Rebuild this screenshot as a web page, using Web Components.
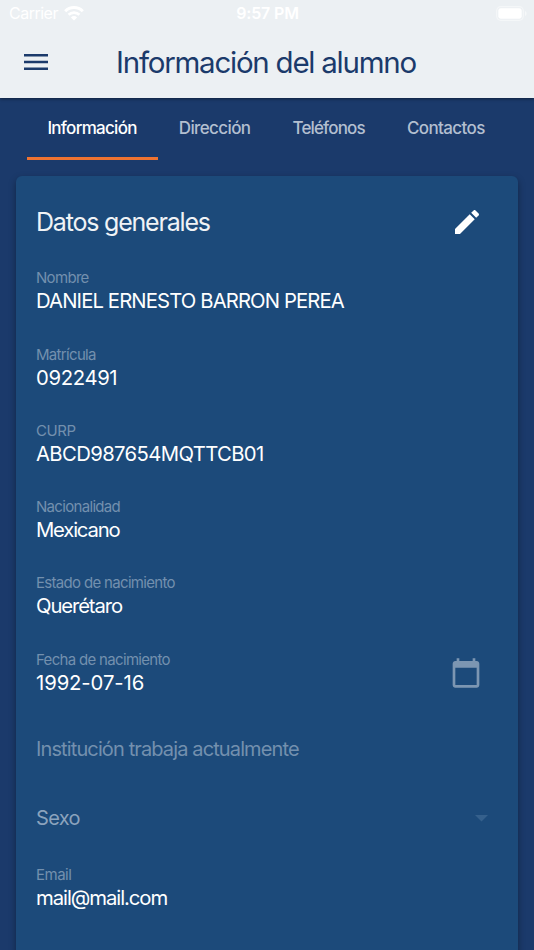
<!DOCTYPE html>
<html lang="es">
<head>
<meta charset="UTF-8">
<meta name="viewport" content="width=device-width, initial-scale=1.0">
<title>Información del alumno</title>
<style>
    html, body {
        margin: 0;
        height: 950px;
        overflow: hidden;
    }
    body {
        --navy: #1b3a6b;
        --card: #1c4a7a;
        --bar: #ecf0f3;
        --accent: #ef7331;
        --muted: #7390ae;
        background: var(--navy);
        color: #fff;
        font-family: Inter, Roboto, "Liberation Sans", sans-serif;
    }
</style>
</head>
<body>
<student-app>
    <status-bar slot="header" carrier="Carrier" time="9:57 PM"></status-bar>
    <nav-bar slot="header">Información del alumno</nav-bar>
    <tab-bar slot="tabs">
        <tab-item active style="letter-spacing: -0.72px">Información</tab-item>
        <tab-item style="letter-spacing: -0.62px">Dirección</tab-item>
        <tab-item style="letter-spacing: -0.85px">Teléfonos</tab-item>
        <tab-item style="letter-spacing: -0.6px">Contactos</tab-item>
    </tab-bar>
    <data-card heading="Datos generales">
        <data-field label="Nombre" style="--track: -0.88px">DANIEL ERNESTO BARRON PEREA</data-field>
        <data-field label="Matrícula" style="--track: -0.35px">0922491</data-field>
        <data-field label="CURP" style="--track: -0.63px; --label-track: -0.4px">ABCD987654MQTTCB01</data-field>
        <data-field label="Nacionalidad" style="--track: -1.2px">Mexicano</data-field>
        <data-field label="Estado de nacimiento" style="--track: -1.12px">Querétaro</data-field>
        <data-field label="Fecha de nacimiento" icon="calendar" style="--track: -0.1px">1992-07-16</data-field>
        <empty-field style="--track: -0.88px">Institución trabaja actualmente</empty-field>
        <empty-field select style="--track: -0.67px">Sexo</empty-field>
        <data-field label="Email" style="--track: -1.06px; --label-track: -0.5px">mail@mail.com</data-field>
    </data-card>
</student-app>

<script>
class StudentApp extends HTMLElement {
    constructor() {
        super();
        this.attachShadow({ mode: 'open' });
    }

    connectedCallback() {
        this.shadowRoot.innerHTML = `
            <style>
                :host {
                    display: flex;
                    flex-direction: column;
                    height: 950px;
                    overflow: hidden;
                }
                header {
                    flex: none;
                    height: 98px;
                    background: var(--bar);
                    box-shadow: 0 1px 3px rgba(0, 0, 0, 0.45);
                }
                main {
                    padding: 0 16px;
                }
            </style>
            <header><slot name="header"></slot></header>
            <slot name="tabs"></slot>
            <main><slot></slot></main>
        `;
    }
}

class StatusBar extends HTMLElement {
    constructor() {
        super();
        this.attachShadow({ mode: 'open' });
    }

    connectedCallback() {
        this.shadowRoot.innerHTML = `
            <style>
                :host {
                    display: grid;
                    grid-template-columns: 1fr auto 1fr;
                    align-items: center;
                    height: 27px;
                    padding: 0 8px 0 9px;
                    font-size: 16px;
                    line-height: 27px;
                }
                .carrier {
                    display: flex;
                    align-items: center;
                    gap: 6px;
                    letter-spacing: -0.5px;
                }
                .time {
                    font-weight: 600;
                    letter-spacing: -0.15px;
                }
                .battery {
                    justify-self: end;
                    margin-right: -1px;
                }
                svg {
                    display: block;
                }
            </style>
            <div class="carrier">
                <span>${this.getAttribute('carrier')}</span>
                <svg width="20" height="15" viewBox="0 0 20 15" fill="none" stroke="#fff">
                    <path d="M1.2 5.2a12.5 12.5 0 0 1 17.6 0" stroke-width="3"/>
                    <path d="M4.6 8.8a7.7 7.7 0 0 1 10.8 0" stroke-width="2.7"/>
                    <path d="M10 14.6 6.9 11.4a4.4 4.4 0 0 1 6.2 0z" fill="#fff" stroke="none"/>
                </svg>
            </div>
            <div class="time">${this.getAttribute('time')}</div>
            <svg class="battery" width="31" height="15" viewBox="0 0 31 15">
                <rect x=".7" y=".7" width="26.6" height="13.6" rx="4" fill="none" stroke="#fff" stroke-opacity=".45" stroke-width="1.2"/>
                <rect x="2.3" y="2.3" width="23.4" height="10.4" rx="2.4" fill="#fff"/>
                <path d="M29 5v5c1-.4 1.6-1.4 1.6-2.5S30 5.4 29 5z" fill="#fff" fill-opacity=".5"/>
            </svg>
        `;
    }
}

class NavBar extends HTMLElement {
    constructor() {
        super();
        this.attachShadow({ mode: 'open' });
    }

    connectedCallback() {
        this.shadowRoot.innerHTML = `
            <style>
                :host {
                    display: grid;
                    grid-template-columns: 24px 1fr 24px;
                    align-items: center;
                    height: 70px;
                    padding: 0 26px 0 24px;
                    color: var(--navy);
                }
                svg {
                    display: block;
                }
                .title {
                    font-size: 29.5px;
                    line-height: 40px;
                    letter-spacing: -1.25px;
                    text-align: center;
                    white-space: nowrap;
                }
            </style>
            <svg width="24" height="16" viewBox="0 0 24 16" fill="currentColor">
                <path d="M0 0h24v2.6H0zM0 6.7h24v2.6H0zM0 13.4h24V16H0z"/>
            </svg>
            <div class="title"><slot></slot></div>
        `;
    }
}

class TabBar extends HTMLElement {
    constructor() {
        super();
        this.attachShadow({ mode: 'open' });
    }

    connectedCallback() {
        this.shadowRoot.innerHTML = `
            <style>
                :host {
                    display: flex;
                    flex: none;
                    height: 62px;
                    padding: 0 27px 16px;
                }
            </style>
            <slot></slot>
        `;
    }
}

class TabItem extends HTMLElement {
    constructor() {
        super();
        this.attachShadow({ mode: 'open' });
    }

    connectedCallback() {
        this.shadowRoot.innerHTML = `
            <style>
                :host {
                    box-sizing: border-box;
                    display: block;
                    height: 62px;
                    padding: 0 21.7px 0 20.4px;
                    border-bottom: 3px solid transparent;
                    color: #b3bfd0;
                    font-size: 17px;
                    font-weight: 500;
                    line-height: 60px;
                    white-space: nowrap;
                }
                :host([active]) {
                    border-bottom-color: var(--accent);
                    color: #fff;
                }
            </style>
            <slot></slot>
        `;
    }
}

class DataCard extends HTMLElement {
    constructor() {
        super();
        this.attachShadow({ mode: 'open' });
    }

    connectedCallback() {
        this.shadowRoot.innerHTML = `
            <style>
                :host {
                    box-sizing: border-box;
                    display: flex;
                    flex-direction: column;
                    height: 800px;
                    padding: 30px 36px 0 20px;
                    border-radius: 6px;
                    background: var(--card);
                    box-shadow: 0 3px 7px rgba(0, 0, 0, 0.36);
                }
                .head {
                    display: flex;
                    justify-content: space-between;
                    align-items: center;
                    height: 32px;
                    margin: 0 -1px 31.4px 0;
                }
                h2 {
                    margin: 0;
                    color: #f0f3f6;
                    font-size: 25px;
                    font-weight: 400;
                    letter-spacing: -1.2px;
                    line-height: 35px;
                    white-space: nowrap;
                }
            </style>
            <div class="head">
                <h2>${this.getAttribute('heading')}</h2>
                <svg width="32" height="32" viewBox="0 0 24 24" fill="#fff">
                    <path d="M3 17.25V21h3.75L17.81 9.94l-3.75-3.75L3 17.25zM20.71 7.04c.39-.39.39-1.02 0-1.41l-2.34-2.34c-.39-.39-1.02-.39-1.41 0l-1.83 1.83 3.75 3.75 1.83-1.83z"/>
                </svg>
            </div>
            <slot></slot>
        `;
    }
}

class DataField extends HTMLElement {
    constructor() {
        super();
        this.attachShadow({ mode: 'open' });
    }

    connectedCallback() {
        const hasIcon = this.getAttribute('icon') === 'calendar';

        this.shadowRoot.innerHTML = `
            <style>
                :host {
                    display: flex;
                    justify-content: space-between;
                    flex: none;
                    height: 46px;
                    margin-bottom: 30.25px;
                    white-space: nowrap;
                }
                .label {
                    color: var(--muted);
                    font-size: 15px;
                    line-height: 18px;
                    letter-spacing: var(--label-track, -0.68px);
                }
                .value {
                    font-size: 20.3px;
                    line-height: 28.3px;
                    letter-spacing: var(--track);
                }
                svg {
                    margin-top: 6px;
                }
            </style>
            <div>
                <div class="label">${this.getAttribute('label')}</div>
                <div class="value"><slot></slot></div>
            </div>
            ${hasIcon ? `
                <svg width="32" height="32" viewBox="0 0 24 24" fill="#7c96b2">
                    <path d="M20 3h-1V1h-2v2H7V1H5v2H4c-1.1 0-2 .9-2 2v16c0 1.1.9 2 2 2h16c1.1 0 2-.9 2-2V5c0-1.1-.9-2-2-2zm0 18H4V8h16v13z"/>
                </svg>
            ` : ''}
        `;
    }
}

// Field without a value: the label stands in for it
class EmptyField extends HTMLElement {
    constructor() {
        super();
        this.attachShadow({ mode: 'open' });
    }

    connectedCallback() {
        this.shadowRoot.innerHTML = `
            <style>
                :host {
                    display: flex;
                    justify-content: space-between;
                    align-items: center;
                    flex: none;
                    height: 28px;
                    margin: 8px -6px 33.5px 0;
                    color: var(--muted);
                    font-size: 20px;
                    line-height: 28px;
                    letter-spacing: var(--track);
                    white-space: nowrap;
                }
                :host([select]) {
                    color: #8ba3bd;
                }
            </style>
            <span><slot></slot></span>
            ${this.hasAttribute('select') ? `
                <svg width="13" height="7" viewBox="0 0 13 7" fill="#35608c">
                    <path d="M0 0h13L6.5 6.5z"/>
                </svg>
            ` : ''}
        `;
    }
}

customElements.define('student-app', StudentApp);
customElements.define('status-bar', StatusBar);
customElements.define('nav-bar', NavBar);
customElements.define('tab-bar', TabBar);
customElements.define('tab-item', TabItem);
customElements.define('data-card', DataCard);
customElements.define('data-field', DataField);
customElements.define('empty-field', EmptyField);
</script>
</body>
</html>
